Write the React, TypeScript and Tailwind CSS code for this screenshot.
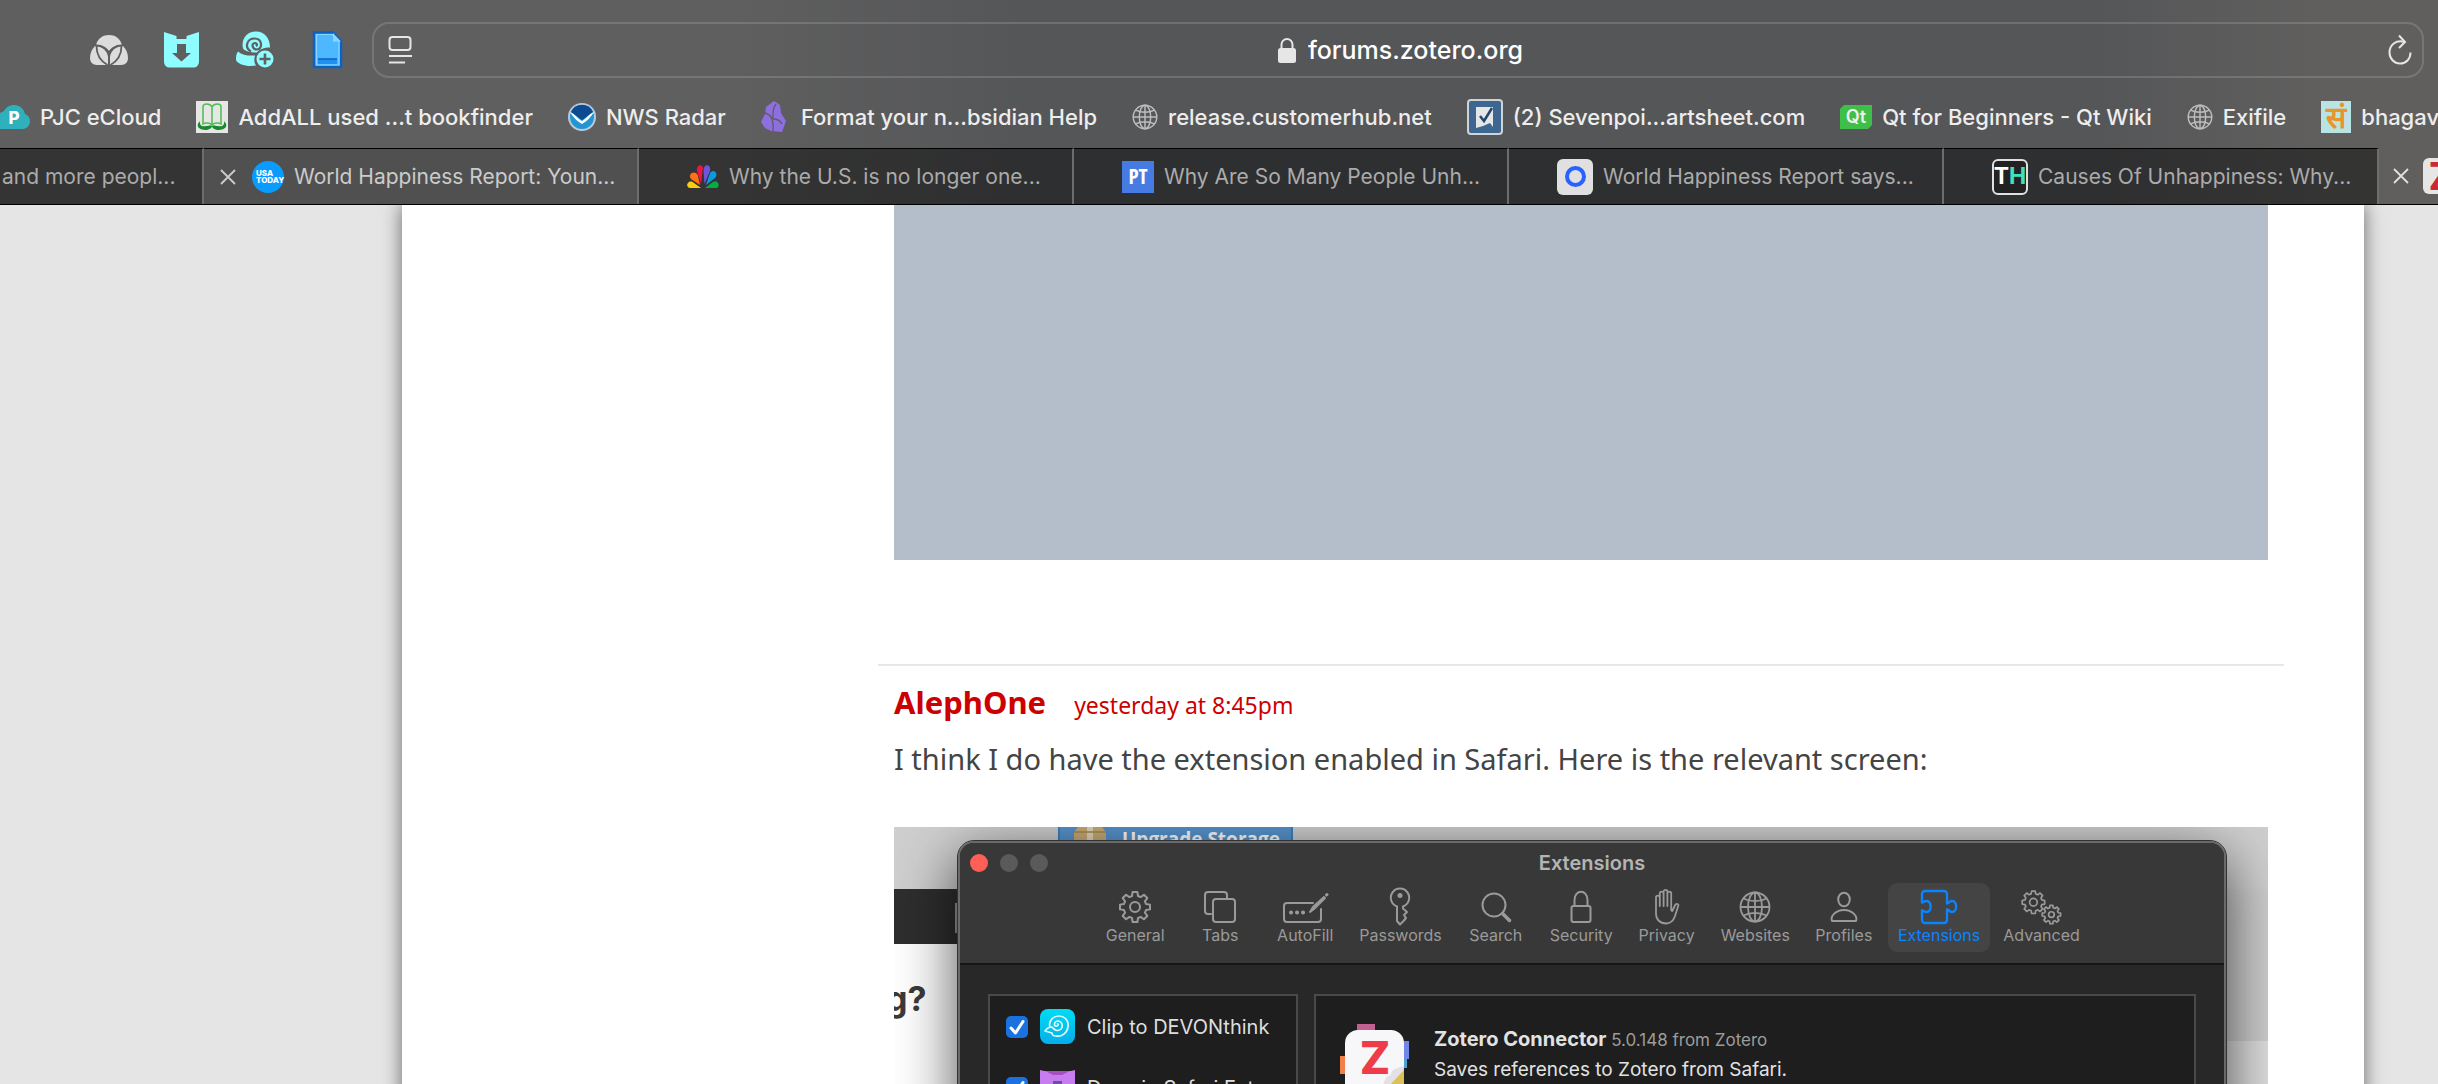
import type { ReactNode } from "react";

const UI_FONT = "font-['Inter','Liberation_Sans',sans-serif]";
const FORUM_FONT = "font-['Noto_Sans','Open_Sans',sans-serif]";

/* ---------- shared icons ---------- */

function GlobeIcon({ className }: { className: string }) {
  return (
    <svg className={className} viewBox="0 0 32 32" fill="none" stroke="currentColor" strokeWidth="1.8">
      <circle cx="16" cy="16" r="14.5" />
      <ellipse cx="16" cy="16" rx="7" ry="14.5" />
      <path d="M16 1.5v29M1.5 16h29M4.5 7.5c6.5 3.6 16.5 3.6 23 0M4.5 24.5c6.5-3.6 16.5-3.6 23 0" />
    </svg>
  );
}

function CloseIcon() {
  return (
    <svg className="size-4" viewBox="0 0 16 16" stroke="currentColor" strokeWidth="1.8" fill="none">
      <path d="M1 1l14 14M15 1L1 15" />
    </svg>
  );
}

function gearPath(cx: number, cy: number, r: number, depth: number, teeth: number) {
  const pts: string[] = [];
  const step = (Math.PI * 2) / teeth;
  const offsets: [number, number][] = [
    [-0.34, r - depth],
    [-0.2, r],
    [0.2, r],
    [0.34, r - depth],
  ];
  for (let i = 0; i < teeth; i++) {
    for (const [o, rad] of offsets) {
      const a = i * step + o * step - Math.PI / 2;
      pts.push(`${(cx + rad * Math.cos(a)).toFixed(2)} ${(cy + rad * Math.sin(a)).toFixed(2)}`);
    }
  }
  return `M${pts.join("L")}Z`;
}

/* ---------- browser toolbar ---------- */

const toolbarButtons: { label: string; icon: ReactNode }[] = [
  {
    label: "Privacy extension",
    icon: (
      <svg className="h-8 w-10" viewBox="0 0 40 32">
        <g fill="#dcdcdc">
          <path d="M7 11C9 4 14 1 20 1s11 3 13 10c-5 0-10 2-13 6-3-4-8-6-13-6z" />
          <path d="M6 12c7 0 12.5 5 13 11v8H8c-4.5 0-7-3-7-7 0-5 2-9 5-12z" />
          <path d="M34 12c-7 0-12.5 5-13 11v8h11c4.5 0 7-3 7-7 0-5-2-9-5-12z" />
        </g>
        <path
          d="M6.5 11.5c6-.5 12 3 13.5 9 1.5-6 7.5-9.5 13.5-9M7.5 12c0 8 4 15 11 19M32.5 12c0 8-4 15-11 19M20 18v13"
          fill="none"
          stroke="#5f5f5f"
          strokeWidth="1.8"
        />
      </svg>
    ),
  },
  {
    label: "Downie",
    icon: (
      <svg className="h-9 w-[35px]" viewBox="0 0 35 36">
        <path fill="#8ffcff" d="M0 0l12.5 4v3h10V4L35 0v30a5.5 5.5 0 0 1-5.5 5.5h-24A5.5 5.5 0 0 1 0 30z" />
        <path fill="#5f5f5f" d="M13 12h9v9h5l-9.5 8.5L8 21h5z" />
      </svg>
    ),
  },
  {
    label: "Clip to DEVONthink",
    icon: (
      <svg className="size-[38px]" viewBox="0 0 38 38">
        <path
          fill="#8ffcff"
          d="M20 .5c9 0 14 7 14 16-6 0-11 2-13 5-6 0-12-1-14-4C5 9 10 .5 20 .5zM2 20.5c4 3.5 10 4.5 17 4-1 4-1 7 1 10C12 36 2 34 0 29c0-3 0-6 2-8.5z"
        />
        <path
          d="M15 20.5c-7-4-4-13 3.5-13 8 0 8.5 10.5 2.5 11-5 0-6-6.5-2-6.5 2 0 2.5 2 1 3"
          fill="none"
          stroke="#5f5f5f"
          strokeWidth="2.2"
        />
        <circle cx="29" cy="28" r="10" fill="#5f5f5f" />
        <circle cx="29" cy="28" r="8.5" fill="#8ffcff" />
        <path d="M29 22.5v11M23.5 28h11" stroke="#5f5f5f" strokeWidth="2.6" />
      </svg>
    ),
  },
  {
    label: "New document",
    icon: (
      <svg className="h-[38px] w-[31px]" viewBox="0 0 31 38">
        <path d="M2 1.5h19L29 10v26H2z" fill="#4db8ff" stroke="#0a63c4" strokeWidth="2.5" />
        <path d="M4.5 3.5h16L27 11v23H4.5z" fill="none" stroke="#8ad4ff" strokeWidth="1.2" />
        <path d="M21 2v8.5h8z" fill="#8fd6ff" />
        <path d="M6 28h19v5H6z" fill="#1f8ff0" />
        <path d="M6 28h19" stroke="#0a63c4" strokeWidth="1.5" />
      </svg>
    ),
  },
];

function AddressBar() {
  return (
    <form className="ml-2 flex h-14 flex-1 items-center rounded-[17px] border-2 border-white/15 pl-3.5 pr-2.5">
      <button type="button" aria-label="Page menu" className="text-[#e6e6e6]">
        <svg className="h-8 w-[25px]" viewBox="0 0 25 32" fill="none" stroke="currentColor" strokeWidth="2">
          <rect x="1.5" y="3" width="21" height="13" rx="3" />
          <path d="M1 22h23M1 28.5h16" />
        </svg>
      </button>
      <div className="flex flex-1 items-center justify-center gap-3">
        <svg className="h-[26px] w-[18px]" viewBox="0 0 18 26">
          <rect x="0" y="11" width="18" height="15" rx="2.5" fill="#e6e6e6" />
          <path d="M3.5 12V7.5a5.5 5.5 0 0 1 11 0V12" fill="none" stroke="#e6e6e6" strokeWidth="2" />
        </svg>
        <input
          aria-label="Address"
          className="field-sizing-content bg-transparent text-[25px] font-medium leading-8 text-white outline-none"
          defaultValue="forums.zotero.org"
        />
      </div>
      <button type="button" aria-label="Reload" className="text-[#e6e6e6]">
        <svg className="h-8 w-6" viewBox="0 0 24 32" fill="none" stroke="currentColor" strokeWidth="2">
          <path d="M16 7.8C8 5.5 1.5 11 1.5 18.5c0 6 4.5 11 10.5 11s10.5-4.5 10.5-11" />
          <path d="M11 1.5l6 6.5-6 6" />
        </svg>
      </button>
    </form>
  );
}

const bookmarks: { label: string; icon: ReactNode }[] = [
  {
    label: "PJC eCloud",
    icon: (
      <svg className="h-6 w-[30px]" viewBox="0 0 30 24">
        <path fill="#2fb0bd" d="M0 8l4-2C6 2 10 0 14 0c6 0 10 4 11 9 3 1 5 4 5 7 0 4-3 8-7 8H0z" />
        <text x="14" y="19" textAnchor="middle" fontSize="17" fontWeight="800" fill="#fff">
          P
        </text>
      </svg>
    ),
  },
  {
    label: "AddALL used ...t bookfinder",
    icon: (
      <svg className="size-8" viewBox="0 0 32 32">
        <rect width="32" height="32" fill="#e6e6e6" />
        <path
          d="M7 6c0-4 7-4 9 0 2-4 9-4 9 0v17c-3-2-7-1-9 1-2-2-6-3-9-1zM16 6v18"
          fill="none"
          stroke="#4cbf4c"
          strokeWidth="1.5"
        />
        <path
          d="M4 20c-5 5-1 9 5 9 4 0 7-2 7-4 0 2 3 4 7 4 6 0 10-4 5-9 1 5-3 6-6 5-3 0-4-1-6 0-2-1-3 0-6 0-3 1-7 0-6-5z"
          fill="#188a2e"
        />
      </svg>
    ),
  },
  {
    label: "NWS Radar",
    icon: (
      <svg className="size-7" viewBox="0 0 28 28">
        <circle cx="14" cy="14" r="14" fill="#b9c9dc" />
        <circle cx="14" cy="14" r="12" fill="#2196d3" />
        <path d="M3 9a12 12 0 0 1 22 0l-11 8z" fill="#0d4a8f" />
        <path d="M2 9c4 1 9 8 12 9 3-1 8-8 12-9-3 5-8 10-12 12C10 19 5 14 2 9z" fill="#fff" />
      </svg>
    ),
  },
  {
    label: "Format your n...bsidian Help",
    icon: (
      <svg className="mr-1 h-8 w-[26px]" viewBox="0 0 26 32">
        <path fill="#8f6fe0" d="M13 0l6 4 1 8 5 8-4 11-11-1-6-3-4-6 4-8 1-7z" />
        <path d="M15 3c-4 5-3 10-3 15M4 12c5 1 9 6 8 18M12 18c4 0 7 1 9 5" fill="none" stroke="#5d5c66" strokeWidth="1.3" />
      </svg>
    ),
  },
  { label: "release.customerhub.net", icon: <GlobeIcon className="size-[26px] text-[#bdbdbd]" /> },
  {
    label: "(2) Sevenpoi...artsheet.com",
    icon: (
      <svg className="size-9" viewBox="0 0 36 36">
        <rect x="1" y="1" width="34" height="34" rx="3" fill="#3d6690" stroke="#cfd3d6" strokeWidth="2" />
        <path d="M9 8h17v20l-3-4-7 3-7 2z" fill="#e6e6e6" />
        <path d="M13 17l4 5 8-13" fill="none" stroke="#23466b" strokeWidth="2.5" />
      </svg>
    ),
  },
  {
    label: "Qt for Beginners - Qt Wiki",
    icon: (
      <svg className="h-6 w-8" viewBox="0 0 32 24">
        <path fill="#3fbf48" d="M4 0h28v20l-4 4H0V4z" />
        <text x="16" y="18" textAnchor="middle" fontSize="18" fontWeight="600" fill="#f0f0f0">
          Qt
        </text>
      </svg>
    ),
  },
  { label: "Exifile", icon: <GlobeIcon className="size-[26px] text-[#bdbdbd]" /> },
  {
    label: "bhagav",
    icon: (
      <span className="flex h-8 w-[30px] items-center justify-center bg-[#b9e4e6] text-[30px] font-semibold leading-8 text-[#e8952a]">
        सं
      </span>
    ),
  },
];

/* ---------- tabs ---------- */

const tabs: { title: string; icon: ReactNode; active?: boolean }[] = [
  {
    title: "World Happiness Report: Youn...",
    active: true,
    icon: (
      <span className="flex size-8 flex-col justify-center rounded-full bg-[#0a9bff] pl-1 text-left text-[8px] font-extrabold leading-[7px] text-white">
        <span>USA</span>
        <span>TODAY</span>
      </span>
    ),
  },
  {
    title: "Why the U.S. is no longer one...",
    icon: (
      <svg className="h-6 w-8" viewBox="0 0 32 24">
        <path fill="#fccc12" d="M14 23H3c-3 0-4-4-1-6 2-1 4 0 5 1z" />
        <path fill="#ff7112" d="M13 20L4 14C1 10 5 6 9 8c1 1 2 2 2 3z" />
        <path fill="#ef1541" d="M14 19L10 6c-1-6 5-8 6-3 0 1-1 2-.5 3z" />
        <path fill="#6e55dc" d="M17.500 19L16.500 6c0-8 8-7 6.500 0z" />
        <path fill="#069de0" d="M19 20l4-12c4-5 9 1 5 5z" />
        <path fill="#05ac3f" d="M18 23l8-6c4-3 8 3 4 6z" />
      </svg>
    ),
  },
  {
    title: "Why Are So Many People Unh...",
    icon: (
      <span className="flex size-8 items-center justify-center bg-[#477be4] font-['Liberation_Sans_Narrow','Open_Sans_Condensed','DejaVu_Sans_Condensed',sans-serif] text-[21px] font-bold text-white">
        PT
      </span>
    ),
  },
  {
    title: "World Happiness Report says...",
    icon: (
      <span className="flex size-9 items-center justify-center rounded-md bg-[#e0e0e0]">
        <span className="size-[21px] rounded-full border-4 border-[#2962ff]" />
      </span>
    ),
  },
  {
    title: "Causes Of Unhappiness: Why...",
    icon: (
      <span className="flex size-9 items-center justify-center rounded-md border-2 border-[#e0e0e0] bg-[#222] text-[23px] font-bold text-white">
        T<span className="text-[#3fe0c0]">H</span>
      </span>
    ),
  },
];

function TabStrip() {
  return (
    <nav className="flex h-[57px] border-b border-black text-[21px] text-[#ababab]">
      <button className="w-[204px] shrink-0 border-r-2 border-t border-r-[#6d6d6d] border-t-black bg-black/45 pl-0.5 text-left">
        and more peopl...
      </button>
      {tabs.map((tab) => (
        <button
          key={tab.title}
          className={`flex w-[435px] shrink-0 items-center gap-2.5 overflow-hidden whitespace-nowrap border-r-2 border-t border-r-[#6d6d6d] border-t-black ${
            tab.active ? "bg-black/15 pl-4 text-[#cbcbcb]" : "bg-black/45 pl-12"
          }`}
        >
          {tab.active && (
            <span className="mr-1.5">
              <CloseIcon />
            </span>
          )}
          <span className="shrink-0">{tab.icon}</span>
          <span>{tab.title}</span>
        </button>
      ))}
      <button aria-label="Zotero Forums" className="flex min-w-0 flex-1 items-center gap-3.5 overflow-hidden pl-3.5 text-[#e0e0e0]">
        <span className="shrink-0">
          <CloseIcon />
        </span>
        <span className="flex size-9 shrink-0 items-center justify-center rounded-md bg-[#e6e6e6] text-[38px] font-bold text-[#cc2936]">
          Z
        </span>
      </button>
    </nav>
  );
}

function BrowserChrome() {
  return (
    <header className="shrink-0 bg-linear-to-r from-[#5f5f5f] from-30% via-[#555658] via-42% to-[#555658] to-88%">
      <div className="bg-linear-to-r from-transparent from-86% to-[#605f5e] to-95%">
        <div className="flex items-center pl-[72px] pr-3.5 pt-[22px]">
          {toolbarButtons.map((b) => (
            <button key={b.label} aria-label={b.label} className="flex w-[73px] justify-center">
              {b.icon}
            </button>
          ))}
          <AddressBar />
        </div>
        <ul className="flex h-[70px] items-center gap-[35px] overflow-hidden whitespace-nowrap pt-2 text-[22px] font-medium text-[#ededed]">
          {bookmarks.map((b) => (
            <li key={b.label} className="shrink-0">
              <a href="#" className="flex items-center gap-2.5">
                {b.icon}
                {b.label}
              </a>
            </li>
          ))}
        </ul>
        <TabStrip />
      </div>
    </header>
  );
}

/* ---------- settings window in the attached screenshot ---------- */

const line = { fill: "none", stroke: "currentColor", strokeWidth: 2, strokeLinejoin: "round", strokeLinecap: "round" } as const;
const thinLine = { ...line, strokeWidth: 1.8 };

const panes: { label: string; icon: ReactNode; active?: boolean }[] = [
  {
    label: "General",
    icon: (
      <svg className="size-9" viewBox="0 0 36 36" {...line}>
        <path d={gearPath(18, 18, 15.2, 3.8, 8)} />
        <circle cx="18" cy="18" r="5" />
      </svg>
    ),
  },
  {
    label: "Tabs",
    icon: (
      <svg className="size-9" viewBox="0 0 36 36" {...line}>
        <path d="M9 25H6a3 3 0 0 1-3-3V6a3 3 0 0 1 3-3h16a3 3 0 0 1 3 3v3" />
        <rect x="11" y="10" width="22" height="23" rx="3" />
      </svg>
    ),
  },
  {
    label: "AutoFill",
    icon: (
      <svg className="h-9 w-12" viewBox="0 0 48 36" {...line}>
        <path d="M32 14H6a3 3 0 0 0-3 3v13a3 3 0 0 0 3 3h31a3 3 0 0 0 3-3V20" />
        <path d="M29 23l3-5L43 8l1 1-11 11z" />
        <path d="M45.5 6l.5-.5" strokeWidth="3" />
        <path d="M10 23.5h.1M16 23.5h.1M22 23.5h.1" strokeWidth="4" />
      </svg>
    ),
  },
  {
    label: "Passwords",
    icon: (
      <svg className="h-10 w-6" viewBox="0 0 24 40" {...line}>
        <path d="M9 19.5a9.2 9.2 0 1 1 6 0v2l4 3.5-3 3 2 3-2.5 3-3.5 3.5L9 34z" />
        <circle cx="12" cy="8.5" r="1.5" fill="currentColor" />
      </svg>
    ),
  },
  {
    label: "Search",
    icon: (
      <svg className="size-9" viewBox="0 0 36 36" {...line}>
        <circle cx="16" cy="16" r="11.5" />
        <path d="M24.5 24.5l7 7" strokeWidth="3.5" />
      </svg>
    ),
  },
  {
    label: "Security",
    icon: (
      <svg className="h-9 w-6" viewBox="0 0 24 36" {...line}>
        <rect x="2.5" y="17" width="19" height="16" rx="2" />
        <path d="M5.500 17v-6C5.500 0 18.500 0 18.500 11v6" />
      </svg>
    ),
  },
  {
    label: "Privacy",
    icon: (
      <svg className="h-9 w-7" viewBox="0 0 28 36" {...thinLine}>
        <path d="M3 20V8.5a1.9 1.9 0 0 1 3.800 0V17 4.500a1.900 1.900 0 0 1 3.800 0V17 2.800a1.900 1.900 0 0 1 3.800 0V17 4.500a1.900 1.900 0 0 1 3.800 0V21l1 1 3-6c1-2 4-1 3 1l-3.200 10c-1.500 4.500-4 7.500-9 7.500-6 0-10-4-10-10z" />
      </svg>
    ),
  },
  { label: "Websites", icon: <GlobeIcon className="size-9 p-0.5" /> },
  {
    label: "Profiles",
    icon: (
      <svg className="h-9 w-8" viewBox="0 0 32 36" {...line}>
        <ellipse cx="16" cy="10.5" rx="5.8" ry="6.8" />
        <path d="M4 32c-2-5 4-11 12-11s14 6 12 11z" />
      </svg>
    ),
  },
  {
    label: "Extensions",
    active: true,
    icon: (
      <svg className="h-9 w-[38px]" viewBox="0 0 38 36" {...line}>
        <path
          d="M5 2h19a3 3 0 0 1 3 3v9.5c2 0 2-2.5 5-2.5 5.5 0 5.500 11 0 11-3 0-3-2.500-5-2.500V31a3 3 0 0 1-3 3H5a3 3 0 0 1-3-3v-9.500c2 0 2 1.500 4.500 1.500 5.500 0 5.500-11 0-11C4 12 4 13.500 2 13.500V5a3 3 0 0 1 3-3z"
          strokeWidth="2.4"
        />
      </svg>
    ),
  },
  {
    label: "Advanced",
    icon: (
      <svg className="h-9 w-11" viewBox="0 0 44 38" {...thinLine}>
        <path d={gearPath(14, 14, 12, 2.8, 8)} />
        <circle cx="14" cy="14" r="4" />
        <path d={gearPath(33, 27, 9.8, 2.4, 8)} />
        <circle cx="33" cy="27" r="3" />
      </svg>
    ),
  },
];

const extensions: { name: string; icon: ReactNode }[] = [
  {
    name: "Clip to DEVONthink",
    icon: (
      <svg className="size-[35px]" viewBox="0 0 35 35">
        <defs>
          <linearGradient id="clip" x1="0" y1="0" x2="0" y2="1">
            <stop offset="0" stopColor="#00dcf5" />
            <stop offset="1" stopColor="#05aeea" />
          </linearGradient>
        </defs>
        <rect width="35" height="35" rx="8" fill="url(#clip)" />
        <path
          d="M10 19c-2-7 3-12 9-12s10 5 9 11c-1 6-6 10-12 9-3 0-4-2-4-3l-7-2c2-3 4-4 7-4 2 3 6 5 9 2 3-4 0-8-3-8-4 0-5 6-1 5 2-1 1-3 0-2"
          fill="none"
          stroke="#e4fbff"
          strokeWidth="1.6"
          strokeLinejoin="round"
        />
      </svg>
    ),
  },
  {
    name: "Downie Safari Exte...",
    icon: (
      <svg className="size-[35px]" viewBox="0 0 35 35">
        <path fill="#c77df0" d="M0 0l4 1h27l4-1v30a5 5 0 0 1-5 5H5a5 5 0 0 1-5-5z" />
        <path fill="#a64fc4" d="M5 1h25l-8 4h-9z" />
        <path fill="#6b4fa0" d="M13 11h9v9h4l-8.500 8L9 20h4z" />
      </svg>
    ),
  },
];

function ZoteroIcon() {
  return (
    <svg className="h-[76px] w-[70px] shrink-0" viewBox="0 0 70 76">
      <rect x="17" y="0" width="18" height="10" fill="#c2608f" />
      <rect x="0" y="32" width="8" height="18" fill="#f08048" />
      <rect x="60" y="17" width="9" height="18" fill="#7087e6" />
      <rect x="60" y="35" width="7" height="9" fill="#4ba3cf" />
      <rect x="5" y="6" width="59" height="66" rx="13" fill="#f7f7f9" />
      <text x="35" y="50" textAnchor="middle" fontSize="45" fontWeight="800" fill="#ee3d48">
        Z
      </text>
      <path d="M64 42c-5 2-13 2-13 9-6 1-6 6-8 10h21z" fill="#e2e2e6" />
      <path d="M64 46L49 62h15z" fill="#d9c25a" />
    </svg>
  );
}

function SettingsWindow() {
  return (
    <section className="relative ml-16 mr-[42px] mt-3.5 overflow-hidden rounded-t-2xl border-2 border-b-0 border-[#6a6a6a] bg-[#282828] shadow-[0_16px_60px_rgba(0,0,0,0.7)] outline-1 outline-[#333]">
      <div className="border-b-2 border-[#161616] bg-[#383838]">
        <div className="grid h-10 grid-cols-3 items-center">
          <div className="flex gap-3 pl-2.5">
            <button aria-label="Close" className="size-[18px] rounded-full bg-[#ff5f57]" />
            <button aria-label="Minimize" className="size-[18px] rounded-full bg-[#5a5a5a]" />
            <button aria-label="Zoom" className="size-[18px] rounded-full bg-[#5a5a5a]" />
          </div>
          <h2 className="text-center text-[20px] font-semibold leading-6 text-[#b4b4b4]">Extensions</h2>
        </div>
        <div className="flex justify-center gap-[3px] pb-[11px]">
          {panes.map((pane) => (
            <button
              key={pane.label}
              className={`flex h-[69px] min-w-[82px] flex-col items-center rounded-[9px] px-2.5 pt-1.5 text-[16px] leading-5 ${
                pane.active ? "bg-[#444] text-[#0a84ff]" : "text-[#9a9a9a]"
              }`}
            >
              <span className="flex h-9 items-center">{pane.icon}</span>
              <span>{pane.label}</span>
            </button>
          ))}
        </div>
      </div>

      <div className="flex gap-4 px-7 pt-[29px]">
        <ul className="h-48 w-[310px] shrink-0 border-2 border-[#4a4a4a] bg-[#1e1e1e] pl-4">
          {extensions.map((ext) => (
            <li key={ext.name} className="h-[61px]">
              <label className="flex h-full items-center gap-3 text-[20px] leading-6 text-[#dedede]">
                <span className="grid size-[22px] shrink-0">
                  <input
                    type="checkbox"
                    defaultChecked
                    className="col-start-1 row-start-1 size-[22px] appearance-none rounded-[5px] bg-[#1a72e0]"
                  />
                  <svg className="pointer-events-none col-start-1 row-start-1 size-[22px]" viewBox="0 0 22 22">
                    <path
                      d="M5 12l4.500 5L17 5.500"
                      fill="none"
                      stroke="#fff"
                      strokeWidth="3"
                      strokeLinecap="round"
                      strokeLinejoin="round"
                    />
                  </svg>
                </span>
                {ext.icon}
                {ext.name}
              </label>
            </li>
          ))}
        </ul>
        <div className="flex h-48 flex-1 gap-6 border-2 border-[#4a4a4a] bg-[#1e1e1e] pl-6 pt-7">
          <ZoteroIcon />
          <div className="text-[#e2e2e2]">
            <p className="text-[17px] leading-[30px] text-[#9c9c9c]">
              <strong className="text-[20px] font-bold text-[#e2e2e2]">Zotero Connector</strong> 5.0.148 from Zotero
            </p>
            <p className="text-[19px] leading-[30px]">Saves references to Zotero from Safari.</p>
          </div>
        </div>
      </div>
    </section>
  );
}

function AttachedScreenshot() {
  return (
    <figure className={`relative mt-12 h-[900px] overflow-hidden bg-white ${UI_FONT}`}>
      {/* desktop and page behind the settings window */}
      <div className="absolute inset-0">
        <div className="flex h-[62px] items-start bg-[#cfcfcf] pl-[164px]">
          <div className="flex h-9 w-[235px] items-start gap-4 overflow-hidden border-x-2 border-[#3a84c4] bg-[#5795cf] pl-3.5">
            <svg className="h-6 w-8" viewBox="0 0 32 24">
              <path fill="#c9ad74" d="M4 0h24l4 5v19H0V5z" />
              <path fill="#e5d9bb" d="M13 0h6v24h-6z" />
              <path d="M0 5h32" stroke="#a58a52" strokeWidth="1.5" />
            </svg>
            <span className="whitespace-nowrap font-['Open_Sans',sans-serif] text-[19px] font-bold leading-6 text-white">Upgrade Storage</span>
          </div>
        </div>
        <div className="flex">
          <div className="w-1/2">
            <div className="h-[55px] bg-[#2e2e2e] pl-[61px] pt-3.5">
              <div className="h-[30px] w-0.5 bg-[#9a9a9a]" />
            </div>
            <p className="-ml-2 mt-[34px] text-[34px] font-bold leading-[42px] text-[#3a3a3a]">g?</p>
          </div>
          <div className="h-[152px] w-1/2 bg-[#cdcdcd]" />
        </div>
        <div className="ml-auto h-[700px] w-1/2 bg-[#dedede]" />
      </div>
      <SettingsWindow />
    </figure>
  );
}

/* ---------- forum page ---------- */

function ForumPage() {
  return (
    <main className="min-h-0 flex-1 overflow-hidden bg-[#e5e5e5] pl-[402px] pr-[74px]">
      <div className={`min-h-full bg-white pl-[476px] pr-20 shadow-[0_0_18px_rgba(0,0,0,0.55)] ${FORUM_FONT}`}>
        <div className="px-4 pb-[104px]">
          <div className="h-[355px] bg-[#b3beca]" />
        </div>
        <article className="border-t-2 border-[#e7e7e7] px-4 pt-4">
          <header className="flex items-baseline gap-7 leading-10">
            <a href="#" className="text-[31px] font-bold text-[#c00]">
              AlephOne
            </a>
            <a href="#" className="text-[23px] text-[#c00]">
              yesterday at 8:45pm
            </a>
          </header>
          <p className="mt-3.5 text-[29px] leading-10 text-[#444]">
            I think I do have the extension enabled in Safari. Here is the relevant screen:
          </p>
          <AttachedScreenshot />
        </article>
      </div>
    </main>
  );
}

export default function App() {
  return (
    <div className={`flex h-screen flex-col overflow-hidden ${UI_FONT}`}>
      <BrowserChrome />
      <ForumPage />
    </div>
  );
}
